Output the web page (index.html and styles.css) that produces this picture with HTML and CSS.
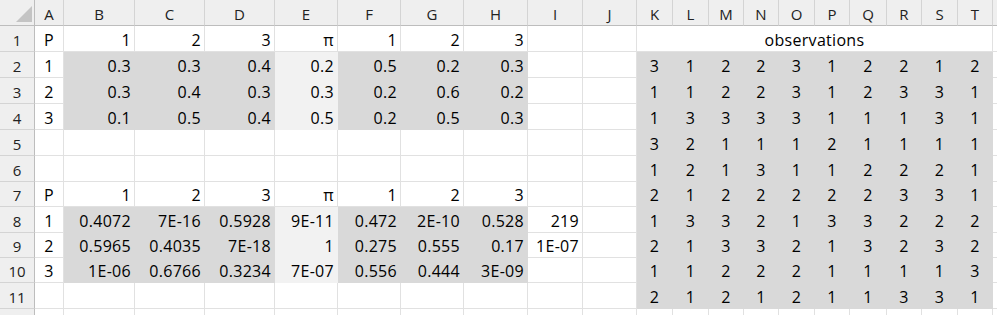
FILE: index.html
```html
<!DOCTYPE html>
<html>
<head>
<meta charset="utf-8">
<link rel="stylesheet" href="styles.css">
</head>
<body>
<div class="sheet">
  <div class="corner"><span class="tri"></span></div>
  <div class="ch">A</div><div class="ch">B</div><div class="ch">C</div><div class="ch">D</div><div class="ch">E</div><div class="ch">F</div><div class="ch">G</div><div class="ch">H</div><div class="ch">I</div><div class="ch">J</div><div class="ch">K</div><div class="ch">L</div><div class="ch">M</div><div class="ch">N</div><div class="ch">O</div><div class="ch">P</div><div class="ch">Q</div><div class="ch">R</div><div class="ch">S</div><div class="ch">T</div><div class="ch edge"></div>

  <div class="rh">1</div><div class="ct">P</div><div>1</div><div>2</div><div>3</div><div>π</div><div>1</div><div>2</div><div>3</div><div></div><div></div><div class="obs">observations</div><div class="edge"></div>

  <div class="rh">2</div><div class="ct">1</div><div class="dk">0.3</div><div class="dk">0.3</div><div class="dk">0.4</div><div class="lt">0.2</div><div class="dk">0.5</div><div class="dk">0.2</div><div class="dk">0.3</div><div></div><div></div>
  <div class="ob">3</div><div class="ob">1</div><div class="ob">2</div><div class="ob">2</div><div class="ob">3</div><div class="ob">1</div><div class="ob">2</div><div class="ob">2</div><div class="ob">1</div><div class="ob">2</div><div class="edge"></div>

  <div class="rh">3</div><div class="ct">2</div><div class="dk">0.3</div><div class="dk">0.4</div><div class="dk">0.3</div><div class="lt">0.3</div><div class="dk">0.2</div><div class="dk">0.6</div><div class="dk">0.2</div><div></div><div></div>
  <div class="ob">1</div><div class="ob">1</div><div class="ob">2</div><div class="ob">2</div><div class="ob">3</div><div class="ob">1</div><div class="ob">2</div><div class="ob">3</div><div class="ob">3</div><div class="ob">1</div><div class="edge"></div>

  <div class="rh">4</div><div class="ct">3</div><div class="dk">0.1</div><div class="dk">0.5</div><div class="dk">0.4</div><div class="lt">0.5</div><div class="dk">0.2</div><div class="dk">0.5</div><div class="dk">0.3</div><div></div><div></div>
  <div class="ob">1</div><div class="ob">3</div><div class="ob">3</div><div class="ob">3</div><div class="ob">3</div><div class="ob">1</div><div class="ob">1</div><div class="ob">1</div><div class="ob">3</div><div class="ob">1</div><div class="edge"></div>

  <div class="rh">5</div><div></div><div></div><div></div><div></div><div></div><div></div><div></div><div></div><div></div><div></div>
  <div class="ob">3</div><div class="ob">2</div><div class="ob">1</div><div class="ob">1</div><div class="ob">1</div><div class="ob">2</div><div class="ob">1</div><div class="ob">1</div><div class="ob">1</div><div class="ob">1</div><div class="edge"></div>

  <div class="rh">6</div><div></div><div></div><div></div><div></div><div></div><div></div><div></div><div></div><div></div><div></div>
  <div class="ob">1</div><div class="ob">2</div><div class="ob">1</div><div class="ob">3</div><div class="ob">1</div><div class="ob">1</div><div class="ob">2</div><div class="ob">2</div><div class="ob">2</div><div class="ob">1</div><div class="edge"></div>

  <div class="rh">7</div><div class="ct">P</div><div>1</div><div>2</div><div>3</div><div>π</div><div>1</div><div>2</div><div>3</div><div></div><div></div>
  <div class="ob">2</div><div class="ob">1</div><div class="ob">2</div><div class="ob">2</div><div class="ob">2</div><div class="ob">2</div><div class="ob">2</div><div class="ob">3</div><div class="ob">3</div><div class="ob">1</div><div class="edge"></div>

  <div class="rh">8</div><div class="ct">1</div><div class="dk">0.4072</div><div class="dk">7E-16</div><div class="dk">0.5928</div><div class="lt">9E-11</div><div class="dk">0.472</div><div class="dk">2E-10</div><div class="dk">0.528</div><div>219</div><div></div>
  <div class="ob">1</div><div class="ob">3</div><div class="ob">3</div><div class="ob">2</div><div class="ob">1</div><div class="ob">3</div><div class="ob">3</div><div class="ob">2</div><div class="ob">2</div><div class="ob">2</div><div class="edge"></div>

  <div class="rh">9</div><div class="ct">2</div><div class="dk">0.5965</div><div class="dk">0.4035</div><div class="dk">7E-18</div><div class="lt">1</div><div class="dk">0.275</div><div class="dk">0.555</div><div class="dk">0.17</div><div>1E-07</div><div></div>
  <div class="ob">2</div><div class="ob">1</div><div class="ob">3</div><div class="ob">3</div><div class="ob">2</div><div class="ob">1</div><div class="ob">3</div><div class="ob">2</div><div class="ob">3</div><div class="ob">2</div><div class="edge"></div>

  <div class="rh">10</div><div class="ct">3</div><div class="dk">1E-06</div><div class="dk">0.6766</div><div class="dk">0.3234</div><div class="lt">7E-07</div><div class="dk">0.556</div><div class="dk">0.444</div><div class="dk">3E-09</div><div></div><div></div>
  <div class="ob">1</div><div class="ob">1</div><div class="ob">2</div><div class="ob">2</div><div class="ob">2</div><div class="ob">1</div><div class="ob">1</div><div class="ob">1</div><div class="ob">1</div><div class="ob">3</div><div class="edge"></div>

  <div class="rh">11</div><div></div><div></div><div></div><div></div><div></div><div></div><div></div><div></div><div></div><div></div>
  <div class="ob">2</div><div class="ob">1</div><div class="ob">2</div><div class="ob">1</div><div class="ob">2</div><div class="ob">1</div><div class="ob">1</div><div class="ob">3</div><div class="ob">3</div><div class="ob">1</div><div class="edge"></div>

  <div class="rh last"></div><div class="last"></div><div class="last"></div><div class="last"></div><div class="last"></div><div class="last"></div><div class="last"></div><div class="last"></div><div class="last"></div><div class="last"></div><div class="last"></div><div class="last"></div><div class="last"></div><div class="last"></div><div class="last"></div><div class="last"></div><div class="last"></div><div class="last"></div><div class="last"></div><div class="last"></div><div class="last"></div><div class="last edge"></div>
</div>
</body>
</html>
```

FILE: styles.css
```css
html, body {
  margin: 0;
  padding: 0;
  background: #ffffff;
  overflow: hidden;
}

.sheet {
  display: grid;
  grid-template-columns: 35px 29px 71px 70px 70px 63px 63px 63px 64px 55px 54px 36px 36px 35px 35px 36px 35px 37px 35px 36px 35px 4px;
  grid-template-rows: 26px 26px 26px 26px 26px 26px 26px 25px 26px 25px 25px 26px 6px;
  width: 997px;
  height: 315px;
  overflow: hidden;
  font-family: "Open Sans", sans-serif;
  font-size: 16px;
  line-height: 18px;
  color: #000000;
}

.sheet > div {
  box-sizing: border-box;
  display: flex;
  align-items: flex-end;
  justify-content: flex-end;
  padding: 0 3px 2px 3px;
  border-right: 1px solid #e1e1e1;
  border-bottom: 1px solid #e1e1e1;
  background: #ffffff;
  white-space: nowrap;
  overflow: hidden;
  letter-spacing: 0.3px;
}

.sheet > .edge,
.sheet > .last {
  padding: 0;
}

.sheet > .edge {
  border-right: none;
}

.sheet > .last {
  border-bottom: none;
}

.sheet > .ct,
.sheet > .ob,
.sheet > .obs {
  justify-content: center;
}

.sheet > .obs {
  grid-column: span 10;
  border-right-color: #e1e1e1;
}

.sheet > .dk,
.sheet > .ob {
  background: #d9d9d9;
  border-color: #d9d9d9;
}

.sheet > .lt {
  background: #f2f2f2;
  border-color: #f2f2f2;
}

.sheet > .ch,
.sheet > .rh,
.sheet > .corner {
  background: #efefef;
  font-size: 15px;
  color: #222222;
  letter-spacing: 0;
  justify-content: center;
}

.sheet > .ch {
  border-right: 1px solid #d4d4d4;
  border-bottom: 1px solid #bdbdbd;
}

.sheet > .ch.edge {
  border-right: none;
}

.sheet > .rh {
  border-right: 1px solid #bdbdbd;
  border-bottom: 1px solid #d4d4d4;
}

.sheet > .rh.last {
  border-bottom: none;
}

.sheet > .corner {
  border-right: 1px solid #bdbdbd;
  border-bottom: 1px solid #bdbdbd;
  justify-content: flex-end;
  padding: 0 2px 3px 0;
}

.tri {
  display: block;
  width: 16px;
  height: 16px;
  background: #c4c4c4;
  clip-path: polygon(100% 0, 100% 100%, 0 100%);
}
```
